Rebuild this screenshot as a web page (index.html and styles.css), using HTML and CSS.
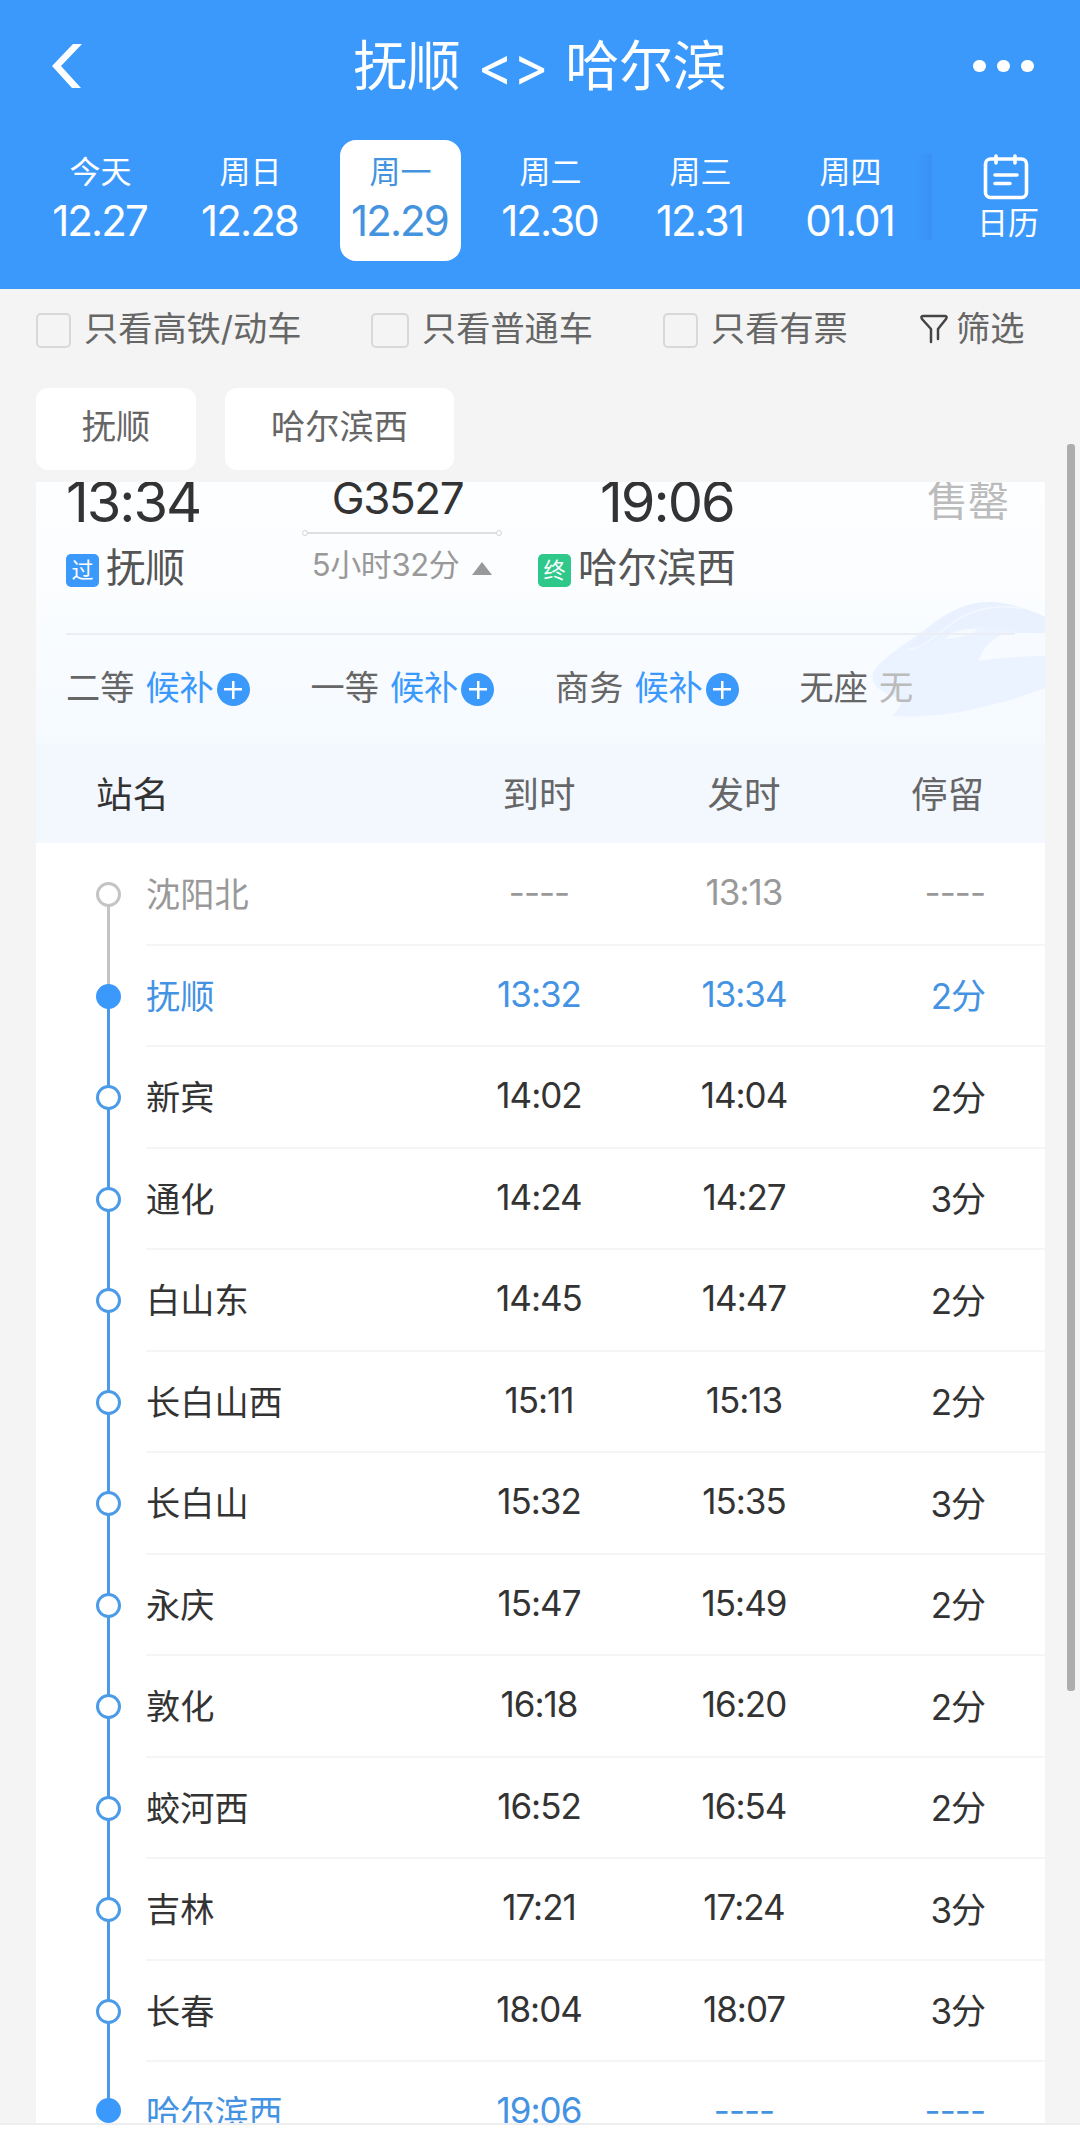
FILE: index.html
```
<!DOCTYPE html>
<html lang="zh-CN">
<head>
  <meta charset="UTF-8" />
  <meta name="viewport" content="width=device-width, initial-scale=1.0"/>
  <title>抚顺 - 哈尔滨</title>
  <link rel="stylesheet" href="styles.css">
</head>
<body>
  <header class="header">
    <div class="title-bar">
      <svg class="back" width="32" height="44" viewBox="0 0 32 44"><path d="M21 0h9L9 22l20 22h-9L0 22z" fill="#fff"/></svg>
      <h1>抚顺 &lt;&gt; 哈尔滨</h1>
      <div class="more"><i></i><i></i><i></i></div>
    </div>
    <div class="date-bar">
      <div class="date"><span>今天</span><b>12.27</b></div>
      <div class="date"><span>周日</span><b>12.28</b></div>
      <div class="date active"><span>周一</span><b>12.29</b></div>
      <div class="date"><span>周二</span><b>12.30</b></div>
      <div class="date"><span>周三</span><b>12.31</b></div>
      <div class="date"><span>周四</span><b>01.01</b></div>
      <div class="calendar">
        <svg width="46" height="46" viewBox="0 0 46 46" fill="none" stroke="#fff" stroke-width="3.6" stroke-linecap="round">
          <rect x="2.5" y="5" width="41" height="38.5" rx="5"/>
          <path d="M13 2v7M32 2v7M12 21h22M12 29.5h15"/>
        </svg>
        <span>日历</span>
      </div>
    </div>
  </header>

  <div class="filters">
    <label class="check first"><i></i>只看高铁/动车</label>
    <label class="check second"><i></i>只看普通车</label>
    <label class="check third"><i></i>只看有票</label>
    <div class="filter">
      <svg width="28" height="30" viewBox="0 0 28 30" fill="none" stroke="#444" stroke-width="2.5" stroke-linecap="round" stroke-linejoin="round">
        <path d="M11 28V15L2 5q-1.500-3 1-3h22q2.500 0 1 3l-8 10v10"/>
      </svg>
      <span>筛选</span>
    </div>
  </div>

  <div class="chips">
    <div class="chip">抚顺</div>
    <div class="chip wide">哈尔滨西</div>
  </div>

  <main class="card">
    <section class="train">
      <!-- faded bullet train -->
      <svg class="train-art" width="180" height="122" viewBox="0 0 180 122">
        <path d="M8 73C15 59 40 44 58 31C80 13 98 3 122 2C146 2 165 10 180 17V88C135 105 80 119 28 116C32 110 38 104 36 99C28 96 4 90 8 73z" fill="#eaf3ff"/>
        <path d="M42 47C62 30 88 3 122 2C146 2 165 10 180 17V33L146 31C122 24 98 26 82 33C68 40 56 51 42 47z" fill="#e9f1ff"/>
        <path d="M42 49C68 50 84 12 125 8Q142 5 158 9" fill="none" stroke="#f3f8ff" stroke-width="1.5"/>
        <path d="M80 39Q92 27 113 29Q103 38 80 39z" fill="#f5faff"/>
        <path d="M113 61Q124 33 150 33H180V56Q145 56 113 61z" fill="#f7fbff"/>
      </svg>
      <div class="trip">
        <div class="stop from">
          <b class="time">13:34</b>
          <div class="place"><i class="tag">过</i>抚顺</div>
        </div>
        <div class="middle">
          <div class="number">G3527</div>
          <div class="line"></div>
          <div class="duration">5小时32分<i></i></div>
        </div>
        <div class="stop to">
          <b class="time">19:06</b>
          <div class="place"><i class="tag green">终</i>哈尔滨西</div>
        </div>
        <div class="sold">售罄</div>
      </div>
      <div class="seats">
        <div class="seat">二等<em>候补</em><i></i></div>
        <div class="seat">一等<em>候补</em><i></i></div>
        <div class="seat">商务<em>候补</em><i></i></div>
        <div class="seat">无座<em class="none">无</em></div>
      </div>
    </section>

    <div class="row head">
      <span class="name">站名</span><span>到时</span><span>发时</span><span class="stay">停留</span>
    </div>
    <div class="row gray">
      <div class="rail"></div><span class="name">沈阳北</span><span>----</span><span>13:13</span><span class="stay">----</span>
    </div>
    <div class="row blue">
      <div class="rail"></div><span class="name">抚顺</span><span>13:32</span><span>13:34</span><span class="stay">2分</span>
    </div>
    <div class="row">
      <div class="rail"></div><span class="name">新宾</span><span>14:02</span><span>14:04</span><span class="stay">2分</span>
    </div>
    <div class="row">
      <div class="rail"></div><span class="name">通化</span><span>14:24</span><span>14:27</span><span class="stay">3分</span>
    </div>
    <div class="row">
      <div class="rail"></div><span class="name">白山东</span><span>14:45</span><span>14:47</span><span class="stay">2分</span>
    </div>
    <div class="row">
      <div class="rail"></div><span class="name">长白山西</span><span>15:11</span><span>15:13</span><span class="stay">2分</span>
    </div>
    <div class="row">
      <div class="rail"></div><span class="name">长白山</span><span>15:32</span><span>15:35</span><span class="stay">3分</span>
    </div>
    <div class="row">
      <div class="rail"></div><span class="name">永庆</span><span>15:47</span><span>15:49</span><span class="stay">2分</span>
    </div>
    <div class="row">
      <div class="rail"></div><span class="name">敦化</span><span>16:18</span><span>16:20</span><span class="stay">2分</span>
    </div>
    <div class="row">
      <div class="rail"></div><span class="name">蛟河西</span><span>16:52</span><span>16:54</span><span class="stay">2分</span>
    </div>
    <div class="row">
      <div class="rail"></div><span class="name">吉林</span><span>17:21</span><span>17:24</span><span class="stay">3分</span>
    </div>
    <div class="row">
      <div class="rail"></div><span class="name">长春</span><span>18:04</span><span>18:07</span><span class="stay">3分</span>
    </div>
    <div class="row blue last">
      <div class="rail"></div><span class="name">哈尔滨西</span><span>19:06</span><span>----</span><span class="stay">----</span>
    </div>
  </main>
  <footer class="bottom"></footer>
  <div class="scrollbar"></div>
</body>
</html>
```
FILE: styles.css
```
*, *::before, *::after {
  box-sizing: border-box;
}

body {
  margin: 0;
  width: 1080px;
  height: 2137px;
  display: flex;
  flex-direction: column;
  position: relative;
  overflow: hidden;
  background: #f4f4f4;
  color: #333;
  font-family: Inter, "Noto Sans CJK SC", sans-serif;
  font-size: 34.2px;
}

i, em {
  font-style: normal;
}

b {
  font-weight: 400;
}

/* header */
.header {
  height: 289px;
  flex: none;
  background: #3b99fc;
  color: #fff;
}

.title-bar {
  height: 140px;
  padding: 0 46px 8px 52px;
  display: flex;
  align-items: center;
  justify-content: space-between;
}

h1 {
  margin: 2px 0 0 22px;
  font-size: 54px;
  font-weight: 400;
  line-height: 80px;
  word-spacing: 2px;
  letter-spacing: -0.3px;
}

.more {
  display: flex;
  gap: 11.5px;
}

.more i {
  width: 12.5px;
  height: 12.5px;
  border-radius: 50%;
  background: #fff;
}

.date-bar {
  display: flex;
  gap: 29px;
  padding-left: 40px;
}

.date {
  width: 121px;
  height: 121px;
  padding-top: 9px;
  flex: none;
  border-radius: 16px;
  text-align: center;
}

.date span, .date b {
  display: block;
}

.date span {
  font-size: 31px;
  line-height: 46px;
}

.date b {
  font-size: 42px;
  line-height: 52px;
  letter-spacing: -1.9px;
  padding-right: 2px;
}

.date.active {
  background: #fff;
  color: #4493df;
}

.calendar {
  width: 163px;
  height: 86px;
  margin: 14px 0 0 -23px;
  padding-left: 60px;
  font-size: 31px;
  background: linear-gradient(to right, rgba(50, 130, 225, 0) 0, rgba(50, 130, 225, .3) 14px, transparent 16px);
}

.calendar svg {
  display: block;
  margin-left: 6px;
}

.calendar span {
  display: block;
  line-height: 45px;
}

/* filters */
.filters {
  height: 99px;
  padding: 0 0 20px 36px;
  display: flex;
  align-items: center;
  color: #666;
  line-height: 50px;
}

.check {
  display: flex;
  align-items: center;
  gap: 13px;
}

.check i {
  width: 35px;
  height: 35px;
  border: 2px solid #d8d8d8;
  border-radius: 5px;
  position: relative;
  top: 2px;
}

.check.first { width: 335px; }
.check.second { width: 292px; }
.check.second i { width: 38px; }
.check.third { width: 257px; }

.filter {
  display: flex;
  align-items: center;
  gap: 8px;
}

/* station chips */
.chips {
  height: 94px;
  padding-left: 36px;
  display: flex;
  gap: 29px;
}

.chip {
  width: 160px;
  height: 82px;
  border-radius: 12px;
  background: #fff;
  color: #666;
  text-align: center;
  line-height: 77px;
}

.chip.wide {
  width: 229px;
}

/* card */
.card {
  width: 1009px;
  height: 1641px;
  flex: none;
  margin-left: 36px;
  overflow: hidden;
  background: #fff;
}

.train {
  height: 262px;
  padding: 0 30px;
  position: relative;
  background: linear-gradient(#fdfeff, #fbfdff 40%, #f5faff);
}

.train-art {
  position: absolute;
  right: 0;
  top: 118px;
}

.trip {
  height: 153px;
  display: flex;
  position: relative;
  border-bottom: 2px solid #ebeff3;
}

.trip .time {
  display: block;
  font-size: 56px;
  line-height: 60px;
  letter-spacing: -2px;
}

.stop {
  margin-top: -10px;
}

.from { width: 236px; }
.to { width: 389px; }

.to .time {
  padding-left: 62px;
}

.place {
  display: flex;
  align-items: center;
  margin-top: 8px;
  gap: 7px;
  font-size: 39.5px;
  line-height: 56px;
  color: #555;
}

.tag {
  width: 33px;
  height: 33px;
  border-radius: 5px;
  background: #3b99fc;
  color: #fff;
  font-size: 22px;
  line-height: 32px;
  text-align: center;
  position: relative;
  top: 2px;
}

.tag.green {
  background: #2dc88a;
}

.middle {
  width: 202px;
  margin-right: 34px;
  text-align: center;
}

.number {
  font-size: 44px;
  line-height: 52px;
  margin-top: -10px;
  height: 60px;
  letter-spacing: -1.4px;
  padding-right: 11px;
}

.line {
  height: 2px;
  margin: 0 7px 0 5px;
  background: #e0e0e0;
  position: relative;
}

.line::before, .line::after {
  content: "";
  width: 6px;
  height: 6px;
  border: 1px solid #d4d4d4;
  border-radius: 50%;
  background: #fff;
  position: absolute;
  top: -2px;
  left: -5px;
}

.line::after {
  left: auto;
  right: -5px;
}

.duration {
  font-size: 31px;
  line-height: 46px;
  margin: 8px 2px 0 0;
  color: #999;
  letter-spacing: -0.4px;
  display: flex;
  align-items: center;
  justify-content: center;
}

.duration i {
  margin: 6px 0 0 13px;
  border: 10px solid transparent;
  border-top: 0;
  border-bottom: 13px solid #999;
}

.sold {
  font-size: 41px;
  line-height: 50px;
  margin-top: -6px;
  color: #bbb;
}

.seats {
  display: flex;
  position: relative;
  padding-top: 28px;
  line-height: 50px;
  color: #666;
}

.seat {
  width: 244.5px;
  flex: none;
  display: flex;
  align-items: center;
}

.seat em {
  margin-left: 11px;
  color: #3b99fc;
}

.seat em.none {
  color: #bbb;
}

.seat i {
  width: 33px;
  height: 33px;
  margin: 3px 0 0 3px;
  border-radius: 50%;
  background:
    linear-gradient(#fff, #fff) center / 18px 2.5px no-repeat,
    linear-gradient(#fff, #fff) center / 2.5px 18px no-repeat,
    #3b99fc;
}

/* timetable */
.row {
  height: 101.5px;
  padding-bottom: 3px;
  display: grid;
  grid-template-columns: 110px 290px 206px 204px 139px 60px;
  align-items: center;
  text-align: center;
  position: relative;
  font-size: 35px;
  letter-spacing: -1px;
}

.row::after {
  content: "";
  position: absolute;
  left: 110px;
  right: 0;
  bottom: -1px;
  height: 2px;
  background: #f5f5f5;
}

.row .name {
  text-align: left;
  font-size: 34.2px;
  letter-spacing: 0;
}

.row .stay {
  text-align: right;
}

.row.head {
  height: 99px;
  grid-template-columns: 400px 206px 204px 138px 61px;
  background: #f3f7fe;
  color: #666;
  font-size: 36.5px;
  letter-spacing: 0;
}

.row.head::after {
  display: none;
}

.row.head .name {
  padding-left: 60px;
  color: #333;
  font-size: 36.5px;
}

.rail {
  align-self: stretch;
  position: relative;
}

.rail::before {
  content: "";
  position: absolute;
  left: 71px;
  top: 51px;
  width: 3px;
  height: 102px;
  background: #4b9be8;
}

.rail::after {
  content: "";
  position: absolute;
  z-index: 1;
  left: 60px;
  top: 39px;
  width: 25px;
  height: 25px;
  border: 3px solid #4b9be8;
  border-radius: 50%;
  background: #fff;
}

.gray {
  color: #999;
}

.gray .rail::before {
  background: #c4c4c4;
}

.gray .rail::after {
  border-color: #c4c4c4;
}

.blue {
  color: #4493e3;
}

.blue .rail::after {
  background: #3b99fc;
  border-color: #3b99fc;
}

.last .rail::before {
  display: none;
}

.last .rail::after {
  top: 37px;
}

.bottom {
  height: 14px;
  flex: none;
  background: #fff;
  border-top: 2px solid #eee;
}

.scrollbar {
  position: absolute;
  left: 1067px;
  top: 444px;
  width: 8px;
  height: 1247px;
  border-radius: 3px;
  background: #adadad;
}
```
